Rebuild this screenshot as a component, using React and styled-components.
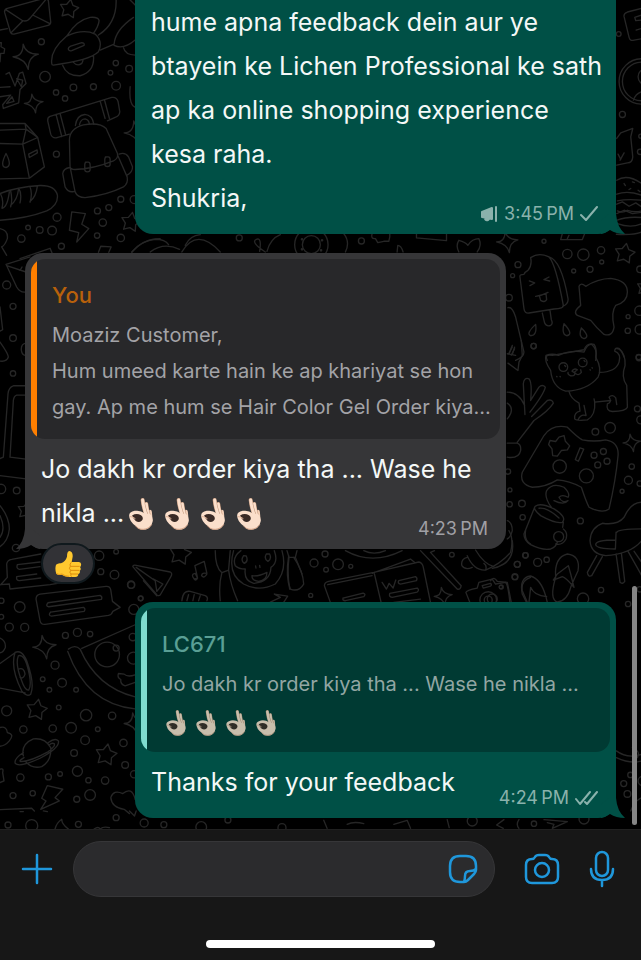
import React from 'react';
import styled, { createGlobalStyle } from 'styled-components';

const GlobalStyle = createGlobalStyle`
  * {
    box-sizing: border-box;
  }

  body {
    margin: 0;
    background: #000;
    font-family: Inter, "Liberation Sans", sans-serif;
  }
`;

const Screen = styled.div`
  display: flex;
  flex-direction: column;
  min-height: 100vh;
  overflow: hidden;
`;

const Chat = styled.main`
  position: relative;
  flex: 1;
  display: flex;
  flex-direction: column;
  justify-content: flex-end;
  padding: 0 25px 11px;
`;

const Wallpaper = styled.svg`
  position: absolute;
  top: 0;
  left: 0;
  width: 100%;
  height: 100%;
  fill: none;
  stroke: #262626;
  stroke-width: 4;
  stroke-linecap: round;
  stroke-linejoin: round;
`;

const Bubble = styled.article`
  position: relative;
  padding: 6px 6px 0;
  border-radius: 18px;
  color: #f4f8f7;
  background: ${p => (p.$out ? '#005046' : '#363638')};
  margin-left: ${p => (p.$out ? '110px' : '0')};
  margin-right: ${p => (p.$out ? '0' : '110px')};
  margin-bottom: ${p => p.$gap || 0}px;
  ${p => p.$continued && 'padding-top: 0; border-radius: 0 0 18px 18px;'}
`;

const Tail = styled.svg`
  position: absolute;
  bottom: 0;
  width: 24px;
  height: 20px;
  ${p => (p.$out ? 'right: -9px;' : 'left: -9px; transform: scaleX(-1);')}
  fill: ${p => (p.$out ? '#005046' : '#363638')};
`;

const Quote = styled.blockquote`
  position: relative;
  margin: 0 0 8px;
  padding: 18px 4px 14px 21px;
  border-radius: 14px;
  background: ${p =>
    p.$out
      ? 'linear-gradient(to right, #7fdccf 6px, #003a33 6px)'
      : 'linear-gradient(to right, #ff7f00 6px, #28282a 6px)'};
  color: ${p => (p.$out ? '#92a6a3' : '#a3a3a7')};
`;

const QuoteName = styled.div`
  margin-bottom: 4px;
  font-size: 22px;
  font-weight: 500;
  line-height: 36px;
  color: ${p => (p.$out ? '#5a9f95' : '#b8610b')};
`;

const QuoteText = styled.div`
  font-size: 20px;
  line-height: 36px;
`;

const Line = styled.span`
  display: block;
`;

const Body = styled.div`
  display: grid;
  padding: 0 4px 8px 10px;
`;

const Text = styled.p`
  grid-area: 1 / 1;
  margin: 0;
  padding-bottom: 6px;
  font-size: 25px;
  line-height: 44px;
`;

const Meta = styled.div`
  grid-area: 1 / 1;
  place-self: end;
  display: flex;
  align-items: center;
  gap: 6px;
  padding-right: 8px;
  font-size: 18px;
  line-height: 24px;
  color: ${p => (p.$out ? '#8ab2ac' : '#a0a0a5')};

  svg {
    fill: none;
    stroke: currentColor;
    stroke-width: 2;
    stroke-linecap: round;
    stroke-linejoin: round;
  }
`;

const Hands = styled.span`
  display: inline-flex;
  gap: ${p => (p.$small ? '10px' : '12px')};
  margin-left: ${p => (p.$small ? '4px' : '5px')};
  vertical-align: ${p => (p.$small ? '-9px' : '-8px')};
  opacity: ${p => (p.$small ? 0.8 : 1)};
  line-height: 0;

  svg {
    width: ${p => (p.$small ? '20px' : '24px')};
    height: ${p => (p.$small ? '26px' : '32px')};
  }
`;

const Reaction = styled.button`
  position: absolute;
  left: 16px;
  bottom: -35px;
  display: flex;
  align-items: center;
  justify-content: center;
  width: 54px;
  height: 41px;
  padding: 0;
  border: 2px solid #10191d;
  border-radius: 21px;
  background: #323236;
`;

const ScrollThumb = styled.div`
  position: absolute;
  right: 4px;
  bottom: 4px;
  width: 5px;
  height: 239px;
  border-radius: 3px;
  background: #858585;
`;

const Composer = styled.footer`
  position: relative;
  padding-bottom: 12px;
  border-top: 1px solid #202020;
  border-bottom: 1px solid #e6e6e6;
  background: #171717;
`;

const ComposerRow = styled.form`
  display: flex;
  align-items: center;
  padding: 11px 9px 0 0;
`;

const IconButton = styled.button`
  display: flex;
  align-items: center;
  justify-content: center;
  flex: none;
  width: ${p => p.$width}px;
  height: 56px;
  padding: 0;
  border: 0;
  background: none;
  color: #1f97db;

  svg {
    fill: none;
    stroke: currentColor;
    stroke-width: 2.5;
    stroke-linecap: round;
    stroke-linejoin: round;
  }
`;

const Field = styled.div`
  flex: 1;
  display: flex;
  min-width: 0;
  height: 56px;
  margin-right: 17px;
  padding: 0 9px 0 24px;
  border: 1px solid #363638;
  border-radius: 28px;
  background: #2b2b2d;
  align-items: center;
`;

const Input = styled.input`
  flex: 1;
  min-width: 0;
  border: 0;
  outline: 0;
  background: none;
  color: #fff;
  font: 24px Inter, sans-serif;
`;

const HomeIndicator = styled.div`
  width: 229px;
  height: 8px;
  margin: 43px auto 0;
  border-radius: 4px;
  background: #fff;
`;

/* wallpaper doodles, drawn at three times their size */
const doodles = [
  {
    x: 0,
    y: 0,
    stars: [[207, 27, 29], [392, 666, 30]],
    sparkles: [[77, 170, 38], [101, 310, 28], [408, 398, 36]],
    dots: [
      [124, 125, 9], [135, 230, 16], [168, 277, 8], [195, 295, 8], [220, 262, 10],
      [280, 260, 9], [347, 189, 8], [331, 218, 7], [387, 206, 10], [348, 257, 13],
      [169, 462, 9], [171, 651, 12], [84, 682, 7], [119, 689, 10], [156, 691, 13],
      [64, 715, 11], [184, 738, 9], [292, 632, 9], [326, 622, 9], [308, 667, 11],
      [291, 706, 8], [362, 597, 9], [402, 598, 12], [362, 713, 11],
    ],
    paths: [
      'M14 38Q12 28 22 25L132-5Q143-5 145 3L152 66Q152 74 144 76L42 102Q34 104 31 96ZM16 28L68 62Q82 66 92 52L138-2M33 98L68 63M148 70L98 45M0 90L22 86',
      'M155 190Q150 150 200 108Q250 85 285 102Q310 125 295 155Q270 180 160 195Q155 195 155 190ZM200 108Q230 60 270 52Q295 50 297 62Q295 80 280 100M188 196Q200 228 240 227Q285 215 280 165M220 187Q232 200 245 190Q250 182 248 178M205 148Q203 142 212 138L245 128Q254 128 252 136L215 152Q207 154 205 148M295 105Q350 70 348 0M300 150L342 132Q345 90 400 52M342 136Q370 150 405 120M405 165Q375 165 370 143M385-5L405 15',
      'M18 222L28 217L45 258L58 220L68 216L78 250L60 268L56 308L10 325L8 314L32 285L0 290M50 236L64 260L68 240ZM36 290L20 310L42 304ZM0 128L4 128L3 140L14 146L12 160L2 160L0 185M0 262L30 260',
      'M168 413Q156 414 152 402L143 362Q142 352 150 349L335 292Q350 290 354 305L359 335Q358 348 345 352L322 362M168 413L208 402M168 343L185 409M180 340L197 405M300 303L315 355M313 299L328 355M226 376Q230 345 254 343Q277 345 281 372M238 374Q242 356 255 356Q266 358 268 372',
      'M210 500L208 420Q208 385 250 374Q300 366 318 385L352 460Q355 475 340 482Q280 506 225 508Q212 508 210 500ZM211 505L225 575Q232 592 255 592Q320 585 370 560Q385 550 381 530L353 466M209 502Q190 505 188 520L195 560Q205 578 221 574M357 462Q375 455 385 470L397 500Q398 515 381 525M256 486h8q6 0 6 8v14q0 7-8 7t-8-7v-14q0-8 6-8M316 470h8q6 0 6 8v14q0 7-8 7t-8-7v-14q0-8 6-8',
      'M0 370L75 370L113 412L133 500L88 534L0 536M0 390L78 387L68 432L0 430M75 370L78 387L113 412L68 432L88 534M86 462L111 449L112 458L88 472ZM18 460Q-2 500 18 502Q38 498 18 460',
      'M0 660Q80 655 140 632Q175 615 172 585Q165 555 120 556Q50 560 0 580M2 582Q12 600 6 624Q22 622 28 575M32 572Q38 600 32 620M32 615Q52 600 56 564Q66 580 60 608M90 560Q98 580 90 606M90 604Q108 590 112 558',
      'M215 635L256 640L245 672L266 685L230 725L236 697L208 690ZM0 685Q25 690 22 715Q15 735 5 740L20 765M390 260Q385 320 410 322M60 775L150 744L156 758M295 756L302 738L333 740L326 756M395 756Q430 715 480 715',
    ],
  },
  {
    x: 0,
    y: 240,
    stars: [],
    sparkles: [],
    dots: [[20, 134, 12], [39, 198, 9], [39, 293, 10], [39, 399, 8]],
    paths: [
      'M90 50L18 72L50 140Q60 158 78 155M20 76L78 95M0 200L8 268L0 272M0 305Q25 340 25 350Q20 365 0 362M78 308Q62 310 64 330Q66 345 78 345',
      'M78 436L40 436Q26 440 24 460L10 650L0 654M78 464L50 464Q42 466 40 480L30 650L78 656M0 705L78 715M60 90L66 80',
    ],
  },
  {
    x: 130,
    y: 225,
    stars: [],
    sparkles: [[1130, 50, 32]],
    dots: [[327, 38, 9], [693, 47, 9], [543, 58, 27], [543, 58, 50], [515, 42, 2], [515, 72, 2], [575, 45, 2], [572, 75, 2]],
    paths: [
      'M5 80Q35 45 75 42Q105 42 115 58M60 80Q100 50 148 72M165 60Q180 30 210 28M155 80Q200 5 270 80M405 80Q360 50 378 42Q395 35 388 78M410 78Q420 40 450 28M640 25Q660 50 645 80',
      'M725 25Q720 42 735 40L742 52L760 48L775 48L778 35L778 25M858 25L858 38L948 46L948 25M800 80L802 60Q812 60 818 80M985 80Q975 60 985 45Q1005 50 1012 60Q1025 40 1045 40Q1055 60 1040 80',
    ],
  },
  {
    x: 440,
    y: 180,
    stars: [[552, 220, 31], [612, 322, 24]],
    sparkles: [],
    dots: [
      [310, 183, 6], [232, 253, 9], [216, 286, 6], [380, 221, 14], [428, 223, 17],
      [481, 210, 11], [483, 245, 6], [448, 267, 9], [399, 272, 6], [598, 267, 10],
      [205, 352, 10], [562, 409, 6], [596, 391, 14], [561, 451, 8], [597, 447, 14],
      [279, 497, 8], [595, 532, 9],
    ],
    paths: [
      'M270 232Q295 215 325 230Q345 250 368 375Q370 385 340 386L265 398Q252 400 250 385L238 290Q236 282 250 282Q252 275 262 270Q275 255 270 232M325 230Q362 240 382 355Q384 370 366 378M305 398L312 428Q318 440 330 435Q338 430 332 418L328 390M266 302L282 308L268 316M325 290L310 298L327 302M285 348Q305 345 322 336M296 346L300 360Q312 368 318 358L316 340',
      'M415 318Q420 305 435 318Q470 295 510 294Q560 300 560 335Q560 365 525 375Q510 395 520 440Q515 470 490 462Q465 440 450 420L410 405Q395 395 420 375Z',
      'M285 432Q255 460 270 466Q290 465 285 432M370 430Q362 462 378 466Q400 462 370 430M422 443Q412 470 430 475Q450 470 422 443M202 382Q215 378 225 410L250 515Q250 530 225 540M205 520L215 500M212 524L222 505M320 540Q310 520 335 525L430 508Q440 485 460 492Q470 505 465 540M525 505Q540 500 550 530',
      'M365 160L360 178L425 178L432 160M380 175L385 165M527 162Q580 165 603 155M527 120Q560 108 603 112M530 92Q545 100 560 90Q580 98 603 92M530 62Q560 55 603 60',
    ],
  },
  {
    x: 560,
    y: 0,
    stars: [],
    sparkles: [],
    dots: [[174, 102, 7], [185, 343, 9], [240, 408, 6], [238, 455, 8], [243, 244, 68], [243, 244, 58], [256, 230, 24]],
    paths: [
      'M243 25L200 36Q188 40 190 50L205 112Q208 124 220 120L243 116M243 45L222 52L225 62L243 60M243 85L226 90M168 415L180 398L216 385L210 410L216 470Q215 488 200 488L168 495M172 462L180 478M190 458L178 480M218 300Q225 280 243 275',
      'M168 540Q200 520 243 550M190 550l4 6M215 545l6 2M205 568l5-3M232 570l5 4M168 582Q200 570 243 585M168 612L185 605L205 618L225 608L243 620M168 640L190 630L215 640L243 636M170 670Q210 685 243 670',
    ],
  },
  {
    x: 490,
    y: 340,
    stars: [],
    sparkles: [[423, 307, 26]],
    dots: [
      [129, 17, 8], [444, 50, 8], [440, 205, 9], [450, 238, 12], [314, 274, 10],
      [358, 262, 16], [207, 378, 20], [287, 406, 21], [310, 344, 9], [338, 333, 9],
      [321, 373, 9], [349, 362, 9], [423, 378, 8], [413, 419, 12], [447, 429, 8],
      [394, 452, 6], [52, 393, 8], [58, 448, 6], [57, 491, 8], [94, 489, 10],
      [96, 530, 8], [269, 541, 9], [105, 644, 8], [80, 671, 9], [141, 665, 12],
      [168, 657, 8], [73, 708, 9], [331, 748, 8], [277, 774, 17], [412, 790, 8],
      [447, 746, 8], [218, 80, 13], [276, 66, 13], [204, 588, 15], [32, 739, 6], [5, 775, 15],
    ],
    paths: [
      'M180 90Q160 60 166 45Q185 38 203 45Q240 28 280 35Q290 10 303 12Q320 25 315 50Q335 85 322 110Q290 150 225 152Q185 140 180 90ZM244 92Q250 82 260 88L250 96ZM252 96Q255 108 240 106Q230 102 232 96M254 98Q262 108 272 96L270 88M198 108l1 1M208 108l1 1M298 88l1 1M304 82l1 1M222 75l3 3M280 60l3 3',
      'M326 96Q375 95 385 65Q392 40 372 32Q372 20 385 24Q405 40 403 75Q390 110 408 135L410 200Q405 212 365 213Q345 212 350 190Q365 185 355 170Q365 160 375 172L378 192M235 153Q240 175 265 188L268 212Q250 215 252 235Q258 242 290 238Q315 225 312 185L360 180M280 195L286 225Q270 220 262 238M312 185L310 175',
      'M95 395L160 285Q185 250 230 260Q260 290 275 298Q310 305 345 298Q385 305 382 345Q375 420 355 505Q335 520 295 500Q285 480 272 440Q235 420 200 418Q165 440 125 440Q85 430 95 395ZM205 290L220 285L224 302L237 316L230 328L212 330L200 347L186 345L184 325L174 312L178 300L195 303ZM268 322L279 326L263 362L254 357Z',
      'M103 222L98 130Q100 110 115 115Q125 125 120 180L145 140Q155 130 164 140Q160 160 118 215M123 228L170 180Q185 175 188 188Q175 210 130 240L80 305M50 155Q85 155 102 195M50 188Q75 205 50 235M50 308L80 308Q92 312 90 330Q85 355 50 350M50 40L75 45M82 90L52 68M82 90L85 65L95 45L92 0M55 40L65 15M65 42L72 20',
      'M132 500L100 580Q100 600 120 612Q155 630 180 625Q195 620 200 605M216 560L218 545M134 497Q150 485 190 505Q230 530 215 545Q195 550 150 525Q125 505 134 497ZM145 503Q170 500 205 532M218 565Q232 575 226 595Q215 615 195 610M182 500Q160 470 168 450Q185 425 220 440Q240 460 232 470Q215 460 205 470Q215 490 232 480Q220 495 190 480',
      'M453 485Q420 485 400 530Q380 555 335 548Q300 560 298 600Q300 640 345 645Q420 640 453 600M378 575Q385 565 453 565M376 575L374 625M315 612Q315 598 375 598M315 612Q318 625 372 625M318 645L290 695Q292 710 303 705L335 648M376 640L388 725Q395 732 402 722L392 638M412 632L453 705M430 632L453 665',
      'M95 760Q85 710 120 706Q150 715 165 765L170 785M95 760L110 790M115 785L120 740Q130 765 168 768M195 710Q190 650 230 640Q270 645 262 690Q250 715 240 740Q230 780 200 784Q175 775 195 710ZM188 718L200 700L233 675L240 700L250 740Q225 710 215 708L188 718',
      'M50 540Q65 545 65 570Q60 590 50 595M65 600Q75 670 5 683M0 720Q10 705 20 722L50 725L62 785',
    ],
  },
  {
    x: 0,
    y: 440,
    stars: [[78, 210, 26], [540, 340, 34]],
    sparkles: [],
    dots: [[3, 145, 14], [50, 150, 10], [48, 322, 11], [302, 393, 9], [343, 402, 13], [393, 432, 11], [422, 473, 7], [297, 345, 14], [348, 333, 7]],
    paths: [
      'M0 195Q28 230 28 265Q25 300 0 318M0 225Q18 265 0 290M2 432L22 410L20 370Q22 358 35 356L122 340M2 432L28 430L30 445L150 432L190 425M52 372L120 364M52 372Q48 384 58 386L120 378M50 408L110 400M50 408Q48 420 58 420L122 412',
      'M398 378Q398 372 408 374L510 394Q518 398 512 408L480 463Q474 468 468 460ZM408 380L465 420L470 452L488 430L460 415M582 415Q570 400 585 398L592 412Q588 422 582 415L592 412L584 375L612 362L620 398Q605 395 604 405Q612 415 620 400',
      'M700 330Q680 400 730 430Q775 455 825 430Q862 390 845 330M722 330Q695 350 705 375Q715 385 735 385Q730 420 760 428Q810 425 812 380Q835 365 822 330M730 345Q720 360 732 368Q745 362 738 346ZM798 340Q790 355 803 362Q815 355 808 340ZM766 376l1 6M778 374l1 6M755 405Q775 408 800 395Q800 420 775 422Q755 420 755 405M645 330Q645 380 665 396L685 388L690 330M665 396Q655 430 660 480M685 388Q690 430 712 480M860 330L866 350L885 350L890 330M866 350Q860 400 868 445M885 350L905 400',
      'M545 480Q548 448 570 452L615 465Q625 470 620 480M560 480L565 462M578 480L582 462M595 480L600 465',
    ],
  },
  {
    x: 230,
    y: 530,
    stars: [],
    sparkles: [[638, 197, 27]],
    dots: [[284, 70, 9], [251, 97, 12], [323, 101, 16], [287, 117, 7], [361, 107, 6], [241, 194, 6], [664, 72, 7], [884, 74, 8], [860, 101, 9], [853, 139, 8], [773, 208, 25], [773, 208, 12], [811, 169, 5]],
    paths: [
      'M175 75Q165 140 180 175Q205 185 220 160Q218 120 190 80M345 60Q425 105 515 60M400 60Q430 75 465 60M300 215L282 165Q282 155 295 152L430 125L565 94Q575 96 578 108L600 215M432 130L452 215M425 128L540 85L552 95M292 162L425 135M455 155L468 175L476 158L488 172L496 148M505 150L555 138Q562 142 558 150L510 160Q500 158 505 150M478 188L560 172Q568 178 560 184L485 200Q474 198 478 188M490 215L570 205M338 202L398 187Q408 190 400 198L345 210Q335 210 338 202',
      'M570 60L680 175Q690 178 692 165L600 65L612 60M120 214L150 200L132 190L172 196L160 215M718 215L706 185Q708 178 740 172L745 155L785 145L795 160L825 155Q832 160 838 215M755 165L780 158Q785 162 780 166L758 172ZM710 75Q730 120 765 118Q770 105 760 98M710 80Q690 85 694 105Q705 120 725 110M765 118Q810 100 840 65Q850 25 835 0M790 108Q760 100 735 58M900 140Q870 150 875 180L890 215M885 0Q880 30 900 40',
    ],
  },
  {
    x: 0,
    y: 580,
    stars: [[110, 387, 32], [318, 522, 33]],
    sparkles: [[133, 199, 35], [404, 428, 32]],
    dots: [
      [4, 60, 8], [59, 79, 16], [4, 108, 7], [28, 139, 12], [74, 140, 12],
      [196, 164, 9], [232, 155, 12], [270, 160, 8], [393, 13, 10], [421, 53, 7],
      [401, 86, 15], [398, 169, 11], [165, 253, 12], [128, 295, 7], [186, 306, 13],
      [148, 327, 7], [228, 327, 7], [176, 380, 7], [20, 390, 15], [258, 403, 17],
      [336, 405, 11], [70, 446, 11], [158, 443, 11], [213, 441, 16], [293, 445, 7],
      [255, 478, 13], [370, 486, 11], [222, 516, 10], [375, 552, 10], [232, 571, 15],
      [180, 579, 7], [145, 588, 9], [61, 590, 11], [265, 598, 8], [315, 599, 11],
      [402, 580, 11], [39, 644, 9], [98, 637, 8], [230, 655, 9], [270, 642, 16],
      [348, 710, 9], [432, 726, 12], [24, 732, 9], [95, 734, 18], [235, 730, 9],
      [491, 731, 9], [603, 738, 16], [683, 717, 9], [845, 740, 12],
      [321, 221, 37], [348, 202, 9], [400, 232, 18],
    ],
    paths: [
      'M108 55Q108 42 120 40L318 17Q330 16 332 28L337 62L360 80L338 92Q335 102 325 104L135 131Q122 132 120 120ZM144 66L300 44Q308 48 304 56L146 78Q135 76 144 66M152 94L250 80Q258 84 252 92L154 106Q143 104 152 94',
      'M205 205Q225 190 240 205Q290 320 405 348M203 212Q260 370 405 384M245 203L405 132M372 280L355 278Q350 290 362 296Q360 310 375 315L405 305M372 280Q382 290 405 282',
      'M45 215Q65 205 80 240Q105 310 92 340Q80 350 65 330Q30 260 45 215ZM55 225Q70 220 80 250Q98 310 86 328Q75 330 65 300Q45 250 55 225M0 248L42 218M0 322L75 336M55 265Q72 258 75 280Q70 295 60 290M0 172Q18 180 16 200Q10 215 0 216M0 440Q20 435 22 455Q45 460 28 480Q15 495 0 496',
      'M70 525Q62 490 100 474Q135 470 152 500Q155 540 125 557Q95 565 75 540M70 515Q40 535 46 548Q60 560 120 532Q180 500 175 480Q165 470 145 485M72 530Q55 540 62 542Q90 542 145 512Q168 495 162 488Q155 485 148 492',
      'M142 614L188 625L165 650L178 660L122 685L138 660L125 652ZM388 698L372 685Q335 680 332 650Q340 625 368 638Q395 615 405 655M388 690L403 705L408 690M0 686L95 682L103 690M60 692L70 692M130 690L142 692M165 744Q170 725 185 715Q185 730 205 744M282 744Q295 735 300 744Q310 735 328 740M0 565Q12 560 8 575L12 600L0 605M430 0L470 45',
    ],
  },
  {
    x: 440,
    y: 740,
    stars: [],
    sparkles: [],
    dots: [[569, 102, 8], [549, 128, 9], [560, 159, 10], [280, 248, 8], [95, 240, 15], [430, 234, 15], [606, 120, 14]],
    paths: [
      'M527 30Q560 55 603 40M527 50Q570 70 603 60M575 20Q600 30 590 50M190 236L168 252L188 262M235 236Q225 250 235 262M310 236L380 242L335 262L340 250L320 245M20 236L26 260M570 210Q580 180 603 170M-280 250Q-260 240 -230 248M-140 250L-100 238L-90 262M-350 238L-340 262',
    ],
  },
];

const starPath = (x, y, r) =>
  Array.from({ length: 10 }, (_, i) => {
    const angle = (i * Math.PI) / 5 - 1.4;
    const len = i % 2 ? r * 0.55 : r;
    return `${i ? 'L' : 'M'}${x + len * Math.cos(angle)} ${y + len * Math.sin(angle)}`;
  }).join('') + 'Z';

const sparklePath = (x, y, r) => {
  const s = r * 0.2;
  return `M${x - s} ${y - r}Q${x} ${y - s} ${x + r} ${y - s}Q${x + s} ${y} ${x + s} ${y + r}Q${x} ${y + s} ${x - r} ${y}Q${x - s} ${y} ${x - s} ${y - r}Z`;
};

const Doodles = () => (
  <Wallpaper viewBox="0 0 641 828" preserveAspectRatio="xMinYMin slice" aria-hidden="true">
    {doodles.map(d => (
      <g key={`${d.x}-${d.y}`} transform={`translate(${d.x} ${d.y}) scale(0.3333)`}>
        {d.paths.map(p => <path key={p} d={p} />)}
        {d.stars.map(s => <path key={s.join()} d={starPath(...s)} />)}
        {d.sparkles.map(s => <path key={s.join()} d={sparklePath(...s)} />)}
        {d.dots.map(([cx, cy, r]) => <circle key={`${cx},${cy},${r}`} cx={cx} cy={cy} r={r} />)}
      </g>
    ))}
  </Wallpaper>
);

const OkHand = () => (
  <svg viewBox="0 0 72 97" fill="none" strokeLinecap="round" strokeLinejoin="round">
    <path d="M63 42Q64 52 65 68" stroke="#f3d0b8" strokeWidth="12" />
    <path d="M52 18Q54 36 61 58" stroke="#c2967a" strokeWidth="12" />
    <path d="M52 18Q54 36 61 58" stroke="#fbdfcb" strokeWidth="9" />
    <path d="M41 6Q43 28 53 54" stroke="#c2967a" strokeWidth="12" />
    <path d="M41 6Q43 28 53 54" stroke="#fbdfcb" strokeWidth="9" />
    <path d="M0 53Q0 43 17 39Q34 36 47 46L66 50Q76 66 68 81Q60 96 43 96Q27 96 20 85Q0 70 0 53Z" fill="#fbdfcb" />
    <path d="M9 53Q22 45 36 52Q46 60 38 69Q30 76 20 70Q12 62 9 53Z" fill="#3a2a25" />
    <path d="M3 56Q10 56 18 62" stroke="#e2b499" strokeWidth="3" />
    <path d="M20 85Q28 96 43 95Q60 94 68 81" stroke="#d2a184" strokeWidth="3" />
  </svg>
);

const OkHands = ({ small }) => (
  <Hands $small={small} role="img" aria-label="👌🏻👌🏻👌🏻👌🏻">
    <OkHand />
    <OkHand />
    <OkHand />
    <OkHand />
  </Hands>
);

const ThumbsUp = () => (
  <svg width="27" height="28" viewBox="0 0 81 84" strokeLinejoin="round">
    <path d="M3 44Q10 38 18 40Q32 34 36 20Q36 4 43 3Q54 5 53 20L50 36H72Q80 38 78 46Q78 50 75 51Q80 58 74 62Q77 69 70 72Q70 81 61 81H40Q28 80 20 74Q10 76 4 72Q-1 58 3 44Z" fill="#ffc82f" />
    <path d="M49 37Q43 42 46 49H74M47 61H73M48 72H69M46 49Q40 55 47 61Q42 67 48 72Q46 78 50 80" fill="none" stroke="#dc8c0c" strokeWidth="3" />
    <path d="M4 70Q12 76 21 72Q30 79 42 79" fill="none" stroke="#e79a14" strokeWidth="3" />
  </svg>
);

const BubbleTail = ({ out }) => (
  <Tail $out={out} viewBox="0 0 24 20" aria-hidden="true">
    <path d="M8 0H15Q16 13 24 20Q15 20 9 16Q5 19 0 20H-2V8Z" />
  </Tail>
);

const App = () => (
  <>
    <GlobalStyle />
    <Screen>
      <Chat>
        <Doodles />

        <Bubble $out $continued $gap={19}>
          <Body>
            <Text>
              <Line>hume apna feedback dein aur ye</Line>
              <Line>btayein ke Lichen Professional ke sath</Line>
              <Line>ap ka online shopping experience</Line>
              <Line>kesa raha.</Line>
              <Line>Shukria,</Line>
            </Text>
            <Meta $out>
              <svg width="17" height="16" viewBox="0 0 17 16">
                <path d="M1 6L11 2V13L1 11ZM4 12Q4 15 7 14L8 13" fill="currentColor" />
                <path d="M15 1V15" />
              </svg>
              <time>3:45{'\u202f'}PM</time>
              <svg width="18" height="16" viewBox="0 0 18 16">
                <path d="M1 9L6 14L17 1" />
              </svg>
            </Meta>
          </Body>
          <BubbleTail out />
        </Bubble>

        <Bubble $gap={53}>
          <Quote>
            <QuoteName>You</QuoteName>
            <QuoteText>
              <Line>Moaziz Customer,</Line>
              <Line>Hum umeed karte hain ke ap khariyat se hon</Line>
              <Line>gay. Ap me hum se Hair Color Gel Order kiya...</Line>
            </QuoteText>
          </Quote>
          <Body>
            <Text>
              <Line>Jo dakh kr order kiya tha ... Wase he</Line>
              <Line>
                nikla ...
                <OkHands />
              </Line>
            </Text>
            <Meta>
              <time>4:23{'\u202f'}PM</time>
            </Meta>
          </Body>
          <BubbleTail />
          <Reaction type="button" aria-label="👍">
            <ThumbsUp />
          </Reaction>
        </Bubble>

        <Bubble $out>
          <Quote $out>
            <QuoteName $out>LC671</QuoteName>
            <QuoteText>
              <Line>Jo dakh kr order kiya tha ... Wase he nikla ...</Line>
              <Line>
                <OkHands small />
              </Line>
            </QuoteText>
          </Quote>
          <Body>
            <Text>
              <Line>Thanks for your feedback</Line>
            </Text>
            <Meta $out>
              <time>4:24{'\u202f'}PM</time>
              <svg width="23" height="16" viewBox="0 0 23 16">
                <path d="M1 9L5 14L15 2M10 12L12 14L22 2" />
              </svg>
            </Meta>
          </Body>
          <BubbleTail out />
        </Bubble>

        <ScrollThumb />
      </Chat>

      <Composer>
        <ComposerRow>
          <IconButton type="button" $width={73} aria-label="Attach">
            <svg width="32" height="32" viewBox="0 0 32 32">
              <path d="M16 2V30M2 16H30" />
            </svg>
          </IconButton>
          <Field>
            <Input type="text" aria-label="Message" />
            <IconButton type="button" $width={44} aria-label="Stickers">
              <svg width="30" height="30" viewBox="0 0 30 30">
                <path d="M16 28H12Q2 28 2 18V12Q2 2 12 2H18Q28 2 28 12V16Q28 18 26 20L20 26Q18 28 16 28ZM16 28Q17 25 17 22Q17 17 22 17Q26 17 28 15" />
              </svg>
            </IconButton>
          </Field>
          <IconButton type="button" $width={60} aria-label="Camera">
            <svg width="36" height="32" viewBox="0 0 36 32">
              <path d="M2 12Q2 6 8 6Q10 6 11 4Q12 2 15 2H21Q24 2 25 4Q26 6 28 6Q34 6 34 12V24Q34 30 28 30H8Q2 30 2 24Z" />
              <circle cx="18" cy="17" r="7" />
            </svg>
          </IconButton>
          <IconButton type="button" $width={60} aria-label="Voice message">
            <svg width="26" height="38" viewBox="0 0 26 38">
              <rect x="7" y="2" width="12" height="24" rx="6" />
              <path d="M2 19Q2 30 13 30Q24 30 24 19M13 30V36" />
            </svg>
          </IconButton>
        </ComposerRow>
        <HomeIndicator />
      </Composer>
    </Screen>
  </>
);

export default App;
